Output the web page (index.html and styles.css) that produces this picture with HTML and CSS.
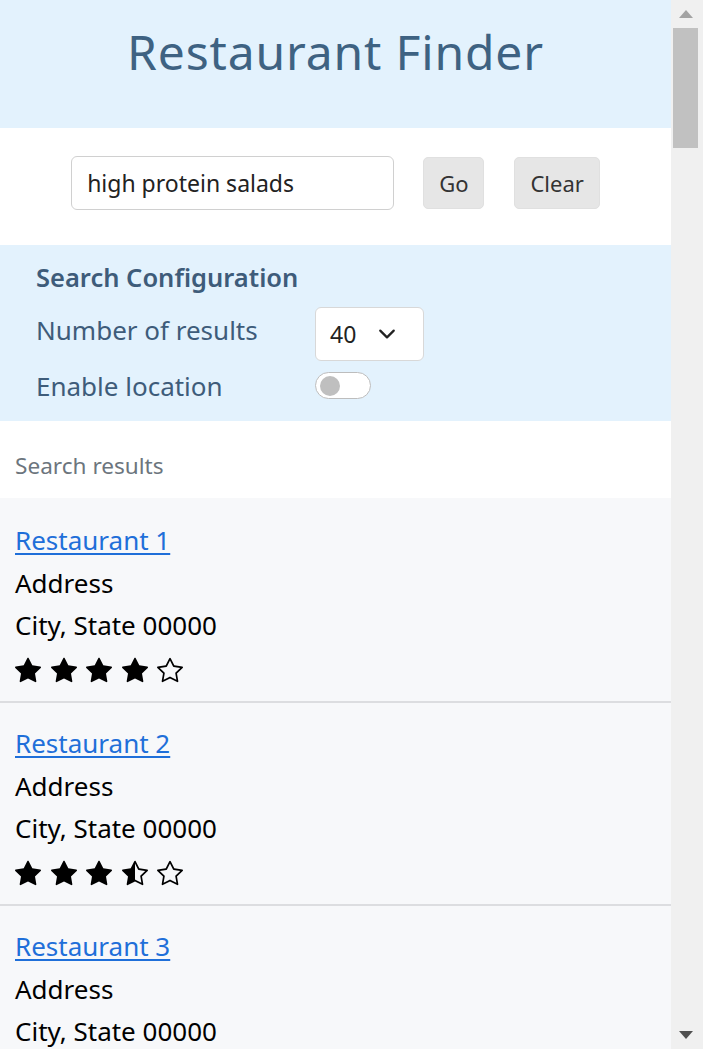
FILE: index.html
```html
<!DOCTYPE html>
<html lang="en">
<head>
<meta charset="utf-8">
<title>Restaurant Finder</title>
<link rel="stylesheet" href="styles.css">
</head>
<body>
<svg class="defs" width="0" height="0" aria-hidden="true">
  <symbol id="star-fill" viewBox="0 0 16 16"><path d="M3.612 15.443c-.386.198-.824-.149-.746-.592l.83-4.73L.173 6.765c-.329-.314-.158-.888.283-.95l4.898-.696L7.538.792c.197-.39.73-.39.927 0l2.184 4.327 4.898.696c.441.062.612.636.282.95l-3.522 3.356.83 4.73c.078.443-.36.79-.746.592L8 13.187l-4.389 2.256z"/></symbol>
  <symbol id="star-empty" viewBox="0 0 16 16"><path d="M2.866 14.85c-.078.444.36.791.746.593l4.39-2.256 4.389 2.256c.386.198.824-.149.746-.592l-.83-4.73 3.522-3.356c.33-.314.16-.888-.282-.95l-4.898-.696L8.465.792a.513.513 0 0 0-.927 0L5.354 5.12l-4.898.696c-.441.062-.612.636-.283.95l3.523 3.356-.83 4.730zm4.905-2.767-3.686 1.894.694-3.957a.565.565 0 0 0-.163-.505L1.71 6.745l4.052-.576a.525.525 0 0 0 .393-.288L8 2.223l1.847 3.658a.525.525 0 0 0 .393.288l4.052.575-2.906 2.77a.565.565 0 0 0-.163.506l.694 3.957-3.686-1.894a.503.503 0 0 0-.461 0z"/></symbol>
  <symbol id="star-half" viewBox="0 0 16 16"><path d="M5.354 5.119 7.538.792A.516.516 0 0 1 8 .5c.183 0 .366.097.465.292l2.184 4.327 4.898.696A.537.537 0 0 1 16 6.32a.548.548 0 0 1-.17.445l-3.523 3.356.83 4.73c.078.443-.36.79-.746.592L8 13.187l-4.389 2.256a.52.52 0 0 1-.146.05c-.342.06-.668-.254-.6-.642l.83-4.73L.173 6.765a.55.55 0 0 1-.172-.403.58.58 0 0 1 .085-.302.513.513 0 0 1 .37-.245l4.898-.696zM8 12.027a.5.5 0 0 1 .232.056l3.686 1.894-.694-3.957a.565.565 0 0 1 .162-.505l2.907-2.770-4.052-.576a.525.525 0 0 1-.393-.288L8.001 2.223 8 2.226v9.8z"/></symbol>
</svg>

<div class="page">
  <header class="app-header">
    <h1 class="app-title">Restaurant Finder</h1>
  </header>

  <section class="search-bar">
    <input class="search-input" type="text" value="high protein salads">
    <button class="btn btn-go" type="button">Go</button>
    <button class="btn btn-clear" type="button">Clear</button>
  </section>

  <section class="config">
    <h2 class="config-title">Search Configuration</h2>
    <div class="config-grid">
      <label class="config-label config-label-raised">Number of results</label>
      <div class="select-wrap">
        <span class="select-value">40</span>
        <svg class="chevron" viewBox="0 0 16 16" width="18" height="18"><path d="M2 5l6 6 6-6" fill="none" stroke="#222" stroke-width="2" stroke-linecap="round" stroke-linejoin="round"/></svg>
      </div>
      <label class="config-label config-label-lowered">Enable location</label>
      <div class="toggle"><span class="knob"></span></div>
    </div>
  </section>

  <div class="results-label">Search results</div>

  <ul class="results" id="results"></ul>
</div>

<div class="scrollbar" aria-hidden="true">
  <div class="sb-button">
    <svg width="14" height="8" viewBox="0 0 14 8"><polygon points="7,0 14,8 0,8" fill="#a3a3a3"/></svg>
  </div>
  <div class="sb-thumb"></div>
  <div class="sb-track"></div>
  <div class="sb-button">
    <svg width="14" height="8" viewBox="0 0 14 8"><polygon points="0,0 14,0 7,8" fill="#505050"/></svg>
  </div>
</div>

<script src="app.js"></script>
</body>
</html>
```

FILE: app.js
```js
(function () {
  var ratings = [4, 3.5, 4.5, 3, 5, 4, 2.5, 3.5, 4, 4.5];
  var list = document.getElementById('results');
  var html = '';
  for (var i = 1; i <= 40; i++) {
    var r = ratings[(i - 1) % ratings.length];
    var stars = '';
    for (var s = 1; s <= 5; s++) {
      var id = r >= s ? 'star-fill' : (r >= s - 0.5 ? 'star-half' : 'star-empty');
      stars += '<svg class="star"><use href="#' + id + '"/></svg>';
    }
    html += '<li class="result">' +
      '<a class="result-name" href="#">Restaurant ' + i + '</a>' +
      '<div class="result-line">Address</div>' +
      '<div class="result-line">City, State 00000</div>' +
      '<div class="stars">' + stars + '</div>' +
      '</li>';
  }
  list.innerHTML = html;
})();
```

FILE: styles.css
```css
html, body {
  margin: 0;
  padding: 0;
}

body {
  font-family: "Noto Sans", "Open Sans", sans-serif;
  color: #000;
  background: #fff;
  display: flex;
  height: 100vh;
  overflow: hidden;
}

.defs {
  position: absolute;
  width: 0;
  height: 0;
  overflow: hidden;
}

.page {
  flex: 1;
  min-width: 0;
  height: 100vh;
  overflow-y: auto;
  scrollbar-width: none;
}

/* Drawn scrollbar */
.scrollbar {
  width: 32px;
  flex: none;
  height: 100vh;
  background: #f0f0f0;
  display: flex;
  flex-direction: column;
}
.sb-button {
  height: 28px;
  flex: none;
  display: flex;
  justify-content: center;
  align-items: center;
  padding-right: 3px;
}
.sb-thumb {
  height: 120px;
  flex: none;
  margin: 0 5px 0 2px;
  background: #c1c1c1;
}
.sb-track {
  flex: 1;
}

/* Header */
.app-header {
  background: #e3f2fd;
  height: 128px;
  box-sizing: border-box;
  padding-top: 20px;
}
.app-title {
  margin: 0;
  text-align: center;
  font-weight: 400;
  font-size: 48px;
  line-height: 64px;
  color: #3e6282;
  letter-spacing: 0.85px;
}

/* Search bar */
.search-bar {
  display: flex;
  justify-content: center;
  align-items: center;
  gap: 29px;
  height: 117px;
  box-sizing: border-box;
  padding-bottom: 8px;
}
.search-input {
  width: 323px;
  height: 54px;
  box-sizing: border-box;
  border: 1px solid #d0d0d0;
  border-radius: 6px;
  padding: 0 15px;
  font-family: inherit;
  font-size: 23px;
  color: #222;
  outline: none;
}
.btn {
  height: 52px;
  box-sizing: border-box;
  padding: 0 15px;
  border: 1px solid #e0e0e0;
  border-radius: 5px;
  background: #e6e6e6;
  font-family: inherit;
  font-size: 22px;
  color: #333;
}
.btn-clear {
  margin-left: 1px;
}

/* Configuration */
.config {
  background: #e3f2fd;
  height: 176px;
  box-sizing: border-box;
  padding: 15px 36px 0;
  color: #3e5c7a;
}
.config-title {
  margin: 0;
  font-size: 25.5px;
  font-weight: 600;
  line-height: 34px;
}
.config-grid {
  display: grid;
  grid-template-columns: 279px auto;
  align-items: center;
  row-gap: 10px;
  margin-top: 13px;
}
.config-label {
  font-size: 26px;
  line-height: 27px;
}
.config-label-raised {
  margin-bottom: 8px;
}
.config-label-lowered {
  margin-top: 2px;
}
.select-wrap {
  position: relative;
  width: 109px;
  height: 54px;
  box-sizing: border-box;
  background: #fff;
  border: 1px solid #d8d8d8;
  border-radius: 6px;
  display: flex;
  align-items: center;
  padding-left: 14px;
  font-size: 23px;
  color: #222;
}
.chevron {
  position: absolute;
  left: 62px;
  top: 17px;
}
.toggle {
  width: 56px;
  height: 27px;
  box-sizing: border-box;
  border: 1px solid #bdbdbd;
  border-radius: 14px;
  background: #fff;
  display: flex;
  align-items: center;
  padding-left: 4px;
}
.knob {
  width: 20px;
  height: 20px;
  border-radius: 50%;
  background: #bfbfbf;
}

/* Results */
.results-label {
  height: 77px;
  box-sizing: border-box;
  padding: 29px 15px 0;
  font-size: 22.6px;
  line-height: 32px;
  color: #6c757d;
}
.results {
  list-style: none;
  margin: 0;
  padding: 2px 0 0;
  background: #f7f8fa;
}
.result {
  padding: 19px 15px 8px;
  border-bottom: 2px solid #dcdde0;
  font-size: 26px;
  line-height: 42px;
}
.result-name {
  display: block;
  width: max-content;
  line-height: 43px;
  color: #1f6fd9;
  text-decoration: underline;
  text-underline-offset: 3px;
}
.result-line {
  display: block;
}
.stars {
  display: flex;
  gap: 9.5px;
  height: 47px;
  align-items: center;
}
.star {
  width: 26px;
  height: 26px;
  fill: #000;
}
```
